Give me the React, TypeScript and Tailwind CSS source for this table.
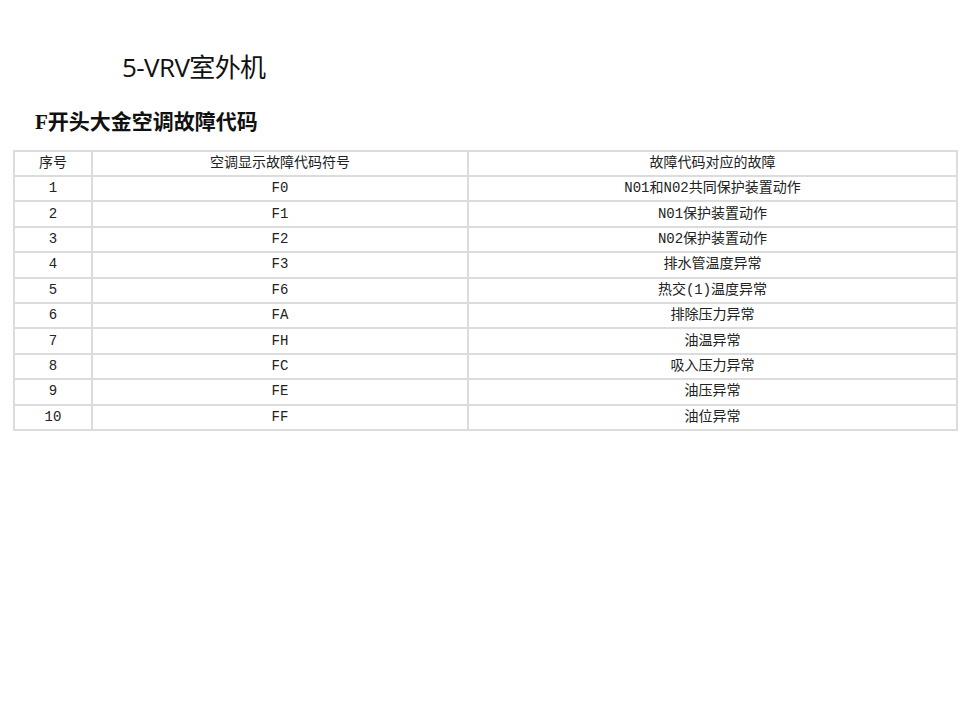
import React from "react";

const rows: [string, string, string][] = [
  ["1", "F0", "N01和N02共同保护装置动作"],
  ["2", "F1", "N01保护装置动作"],
  ["3", "F2", "N02保护装置动作"],
  ["4", "F3", "排水管温度异常"],
  ["5", "F6", "热交(1)温度异常"],
  ["6", "FA", "排除压力异常"],
  ["7", "FH", "油温异常"],
  ["8", "FC", "吸入压力异常"],
  ["9", "FE", "油压异常"],
  ["10", "FF", "油位异常"],
];

export default function App() {
  return (
    <div className="w-[960px] h-[720px] bg-white relative overflow-hidden">
      <div
        className="pt-[49px] pl-[122px] text-[26px] leading-[36px] text-[#111]"
        style={{ fontFamily: '"Open Sans", "Noto Sans CJK SC", sans-serif', letterSpacing: "-0.6px" }}
      >
        5-VRV室外机
      </div>
      <div
        className="mt-[23px] pl-[35px] text-[21px] leading-[28px] font-bold text-[#111]"
        style={{ fontFamily: '"Liberation Serif", "Noto Sans CJK SC", serif' }}
      >
        F开头大金空调故障代码
      </div>
      <div className="mt-[14px] ml-[13px] w-[945px]">
        <table
          className="w-full border-collapse text-[14px] text-[#222]"
          style={{ fontFamily: '"Liberation Mono", "Noto Sans CJK SC", monospace' }}
        >
          <colgroup>
            <col className="w-[78px]" />
            <col className="w-[376px]" />
            <col />
          </colgroup>
          <tbody>
            <tr className="h-[25px]">
              <td className="border-2 border-[#dcdcdc] text-center p-0">序号</td>
              <td className="border-2 border-[#dcdcdc] text-center p-0">空调显示故障代码符号</td>
              <td className="border-2 border-[#dcdcdc] text-center p-0">故障代码对应的故障</td>
            </tr>
            {rows.map((r) => (
              <tr key={r[0]} className="h-[25.4px]">
                <td className="border-2 border-[#dcdcdc] text-center p-0">{r[0]}</td>
                <td className="border-2 border-[#dcdcdc] text-center p-0">{r[1]}</td>
                <td className="border-2 border-[#dcdcdc] text-center p-0">{r[2]}</td>
              </tr>
            ))}
          </tbody>
        </table>
      </div>
    </div>
  );
}
